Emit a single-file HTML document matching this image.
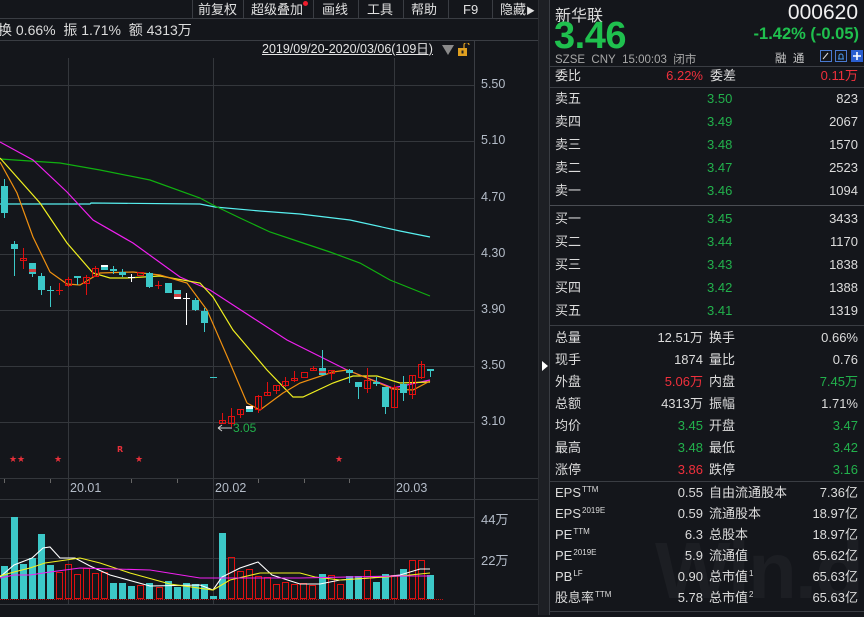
<!DOCTYPE html>
<html><head><meta charset="utf-8">
<style>
*{margin:0;padding:0;box-sizing:border-box}
body{width:864px;height:615px;overflow:hidden;background:#14161b;font-family:"Liberation Sans","Noto Sans CJK SC",sans-serif;color:#dcdcdc;position:relative}
.a{position:absolute;white-space:nowrap}
.menu{font-size:13px;top:1px;line-height:17px;color:#e0e0e0}
.ax{font-size:12.5px;color:#b4bcc8;left:481px}
.rp{position:absolute;left:550px;width:314px;font-size:13px}
.row{position:absolute;left:0;width:314px;height:20px;line-height:20px}
.row span{position:absolute;top:0}
.l1{left:5px}.v1{right:161px;text-align:right}.l2{left:159px}.v2{right:6px;text-align:right}
.p{left:157px;color:#22b14c}
.g{color:#22b14c}.r{color:#f0303c}
sup{font-size:8px;line-height:0;position:relative;top:-5px;vertical-align:baseline;margin-left:1px}
.sep{position:absolute;left:0;width:314px;height:1px;background:#3a3d43}
</style></head><body>
<div class="a" style="left:0;top:18px;width:538px;height:1px;background:#3a3d43"></div>
<div class="a" style="left:0;top:40px;width:538px;height:1px;background:#3a3d43"></div>
<div class="a" style="left:192px;top:0;width:1px;height:18px;background:#3a3d43"></div>
<div class="a" style="left:243px;top:0;width:1px;height:18px;background:#3a3d43"></div>
<div class="a" style="left:313px;top:0;width:1px;height:18px;background:#3a3d43"></div>
<div class="a" style="left:358px;top:0;width:1px;height:18px;background:#3a3d43"></div>
<div class="a" style="left:403px;top:0;width:1px;height:18px;background:#3a3d43"></div>
<div class="a" style="left:448px;top:0;width:1px;height:18px;background:#3a3d43"></div>
<div class="a" style="left:492px;top:0;width:1px;height:18px;background:#3a3d43"></div>
<div class="a menu" style="left:198px">前复权</div>
<div class="a menu" style="left:251px">超级叠加</div>
<div class="a" style="left:303px;top:1px;width:5px;height:5px;border-radius:50%;background:#f01c2c"></div>
<div class="a menu" style="left:322px">画线</div>
<div class="a menu" style="left:367px">工具</div>
<div class="a menu" style="left:411px">帮助</div>
<div class="a menu" style="left:463px">F9</div>
<div class="a menu" style="left:500px">隐藏<span style="font-size:9px">▶</span></div>
<div class="a" style="left:-2px;top:21px;font-size:14px;line-height:18px">换 0.66%&nbsp;&nbsp;振 1.71%&nbsp;&nbsp;额 4313万</div>
<div class="a" style="left:262px;top:41px;font-size:12.5px;line-height:16px;text-decoration:underline;color:#e4e4e4">2019/09/20-2020/03/06(109日)</div>
<svg class="a" style="left:440px;top:43px" width="30" height="14"><polygon points="2,2 14,2 8,12" fill="#8a8a8a"/><rect x="18" y="5" width="9" height="8" fill="#e0a020"/><path d="M24 5 V2 a2.5 2.5 0 0 1 5 0" stroke="#e0a020" fill="none" stroke-width="1.2"/><rect x="21.5" y="7.5" width="2" height="3" fill="#222"/></svg>
<div class="a" style="left:474px;top:40px;width:1px;height:575px;background:#3a3d43"></div>
<div class="a" style="left:538px;top:0;width:12px;height:615px;background:#1d1f24;border-right:1px solid #3a3d43"></div>
<div class="a" style="left:538px;top:0;width:1px;height:615px;background:#2a2c31"></div>
<svg class="a" style="left:541px;top:360px" width="8" height="12"><polygon points="1,1 7,6 1,11" fill="#fff"/></svg>

<div class="a ax" style="top:77px">5.50</div>
<div class="a ax" style="top:133px">5.10</div>
<div class="a ax" style="top:190px">4.70</div>
<div class="a ax" style="top:246px">4.30</div>
<div class="a ax" style="top:302px">3.90</div>
<div class="a ax" style="top:358px">3.50</div>
<div class="a ax" style="top:414px">3.10</div>
<div class="a ax" style="top:509px;font-size:13px">44万</div>
<div class="a ax" style="top:550px;font-size:13px">22万</div>
<div class="a" style="left:70px;top:481px;font-size:12.5px;color:#b4bcc8">20.01</div>
<div class="a" style="left:215px;top:481px;font-size:12.5px;color:#b4bcc8">20.02</div>
<div class="a" style="left:396px;top:481px;font-size:12.5px;color:#b4bcc8">20.03</div>

<svg class="a" style="left:0;top:0" width="538" height="615">
<g stroke="#34373c" stroke-width="1">
<line x1="0" y1="85.5" x2="474" y2="85.5"/><line x1="0" y1="141.5" x2="474" y2="141.5"/><line x1="0" y1="198.5" x2="474" y2="198.5"/><line x1="0" y1="254.5" x2="474" y2="254.5"/><line x1="0" y1="310.5" x2="474" y2="310.5"/><line x1="0" y1="366.5" x2="474" y2="366.5"/><line x1="0" y1="422.5" x2="474" y2="422.5"/>
<line x1="68.5" y1="58" x2="68.5" y2="604"/><line x1="213.5" y1="58" x2="213.5" y2="604"/><line x1="394.5" y1="58" x2="394.5" y2="604"/>
<line x1="0" y1="478.5" x2="538" y2="478.5"/><line x1="0" y1="499.5" x2="538" y2="499.5"/>
<line x1="0" y1="517.5" x2="474" y2="517.5"/><line x1="0" y1="558.5" x2="474" y2="558.5"/><line x1="0" y1="604.5" x2="538" y2="604.5"/>
</g>
<g stroke="#666" stroke-width="1"><line x1="4.5" y1="479" x2="4.5" y2="483"/><line x1="50.5" y1="479" x2="50.5" y2="483"/><line x1="131.5" y1="479" x2="131.5" y2="483"/><line x1="177.5" y1="479" x2="177.5" y2="483"/><line x1="258.5" y1="479" x2="258.5" y2="483"/><line x1="304.5" y1="479" x2="304.5" y2="483"/><line x1="349.5" y1="479" x2="349.5" y2="483"/></g>
<g fill="none" stroke-width="1.2">
<polyline stroke="#58f0f0" points="0,204 90,204 91,203 200,204 215,207 260,211 300,214 350,220 400,231 430,237"/>
<polyline stroke="#10b010" points="0,159 60,163 100,170 150,180 200,198 213,205 240,218 270,232 300,242 330,252 360,263 390,280 430,296"/>
<polyline stroke="#f020f0" points="0,142 33,160 67,192 93,220 133,243 180,277 210,290 250,316 287,340 347,370 393,388 430,380"/>
<polyline stroke="#f0f020" points="0,158 40,203 67,243 93,273 110,278 127,278 160,276 200,283 213,297 233,330 267,370 293,397 303,397 333,383 353,376 377,376 400,383 430,382"/>
<polyline stroke="#f09010" points="0,162 17,193 33,237 50,272 67,284 80,285 100,273 133,272 160,275 187,283 207,310 230,363 247,403 260,410 283,393 300,383 333,372 347,370 367,378 393,389 413,390 430,381"/>
</g>
<text x="233" y="432" font-size="12" fill="#22b14c" font-family="Liberation Sans">3.05</text>
<path d="M218 428 H232 M218 428 l4 -3 M218 428 l4 3" stroke="#ccc" fill="none"/>
<g fill="#e8303a" font-size="9" font-family="DejaVu Sans"><text x="9" y="462">★</text><text x="17" y="462">★</text><text x="54" y="462">★</text><text x="135" y="462">★</text><text x="335" y="462">★</text><text x="117" y="452" font-size="8" font-weight="bold">R</text></g>
<line x1="0" y1="599.5" x2="443" y2="599.5" stroke="#c01010" stroke-dasharray="1,1"/>
</svg>

<div class="a" style="left:655px;top:525px;font-size:80px;font-weight:bold;color:#1c1e23;letter-spacing:-2px">Win.d</div>
<div class="rp" style="top:0;height:615px">
 <div class="a" style="left:5px;top:2px;font-size:16px">新华联</div>
 <div class="a" style="right:6px;top:1px;font-size:21px;color:#f0f0f0">000620</div>
 <div class="a g" style="left:4px;top:15px;font-size:38px;font-weight:bold;letter-spacing:-0.5px;color:#1fc04e">3.46</div>
 <div class="a g" style="right:5px;top:25px;font-size:16.5px;font-weight:bold;color:#1fc04e">-1.42% (-0.05)</div>
 <div class="a" style="left:5px;top:51px;font-size:11.5px;color:#a8a8a8">SZSE&nbsp;&nbsp;CNY&nbsp;&nbsp;15:00:03&nbsp;&nbsp;闭市</div>
 <div class="a" style="left:225px;top:50px;font-size:11.5px;color:#ccc">融&nbsp;&nbsp;通</div>
 <svg class="a" style="left:270px;top:50px" width="44" height="13"><rect x="0.5" y="0.5" width="11" height="11" fill="none" stroke="#4a7ad0"/><path d="M3 9 L8 3" stroke="#ddd"/><rect x="15.5" y="0.5" width="11" height="11" fill="none" stroke="#4a7ad0"/><path d="M18 9 h6 M19 9 V6 a2 2 0 0 1 4 0 V9" stroke="#4a9af0" fill="none"/><rect x="31" y="0" width="12" height="12" fill="#2a5fd0"/><path d="M37 2 V10 M33 6 H41" stroke="#fff" stroke-width="1.6"/></svg>
 <div class="sep" style="top:66px"></div>
 <div class="row" style="top:66px"><span class="l1">委比</span><span class="v1 r">6.22%</span><span class="l2" style="left:160px">委差</span><span class="v2 r">0.11万</span></div>
 <div class="sep" style="top:87px"></div>
 <div class="row" style="top:89px"><span class="l1">卖五</span><span class="p">3.50</span><span class="v2">823</span></div>
 <div class="row" style="top:112px"><span class="l1">卖四</span><span class="p">3.49</span><span class="v2">2067</span></div>
 <div class="row" style="top:135px"><span class="l1">卖三</span><span class="p">3.48</span><span class="v2">1570</span></div>
 <div class="row" style="top:158px"><span class="l1">卖二</span><span class="p">3.47</span><span class="v2">2523</span></div>
 <div class="row" style="top:181px"><span class="l1">卖一</span><span class="p">3.46</span><span class="v2">1094</span></div>
 <div class="sep" style="top:205px;background:#4a4d53"></div>
 <div class="row" style="top:209px"><span class="l1">买一</span><span class="p">3.45</span><span class="v2">3433</span></div>
 <div class="row" style="top:232px"><span class="l1">买二</span><span class="p">3.44</span><span class="v2">1170</span></div>
 <div class="row" style="top:255px"><span class="l1">买三</span><span class="p">3.43</span><span class="v2">1838</span></div>
 <div class="row" style="top:278px"><span class="l1">买四</span><span class="p">3.42</span><span class="v2">1388</span></div>
 <div class="row" style="top:301px"><span class="l1">买五</span><span class="p">3.41</span><span class="v2">1319</span></div>
 <div class="sep" style="top:325px"></div>
 <div class="row" style="top:328px"><span class="l1">总量</span><span class="v1">12.51万</span><span class="l2">换手</span><span class="v2">0.66%</span></div>
 <div class="row" style="top:350px"><span class="l1">现手</span><span class="v1">1874</span><span class="l2">量比</span><span class="v2">0.76</span></div>
 <div class="row" style="top:372px"><span class="l1">外盘</span><span class="v1 r">5.06万</span><span class="l2">内盘</span><span class="v2 g">7.45万</span></div>
 <div class="row" style="top:394px"><span class="l1">总额</span><span class="v1">4313万</span><span class="l2">振幅</span><span class="v2">1.71%</span></div>
 <div class="row" style="top:416px"><span class="l1">均价</span><span class="v1 g">3.45</span><span class="l2">开盘</span><span class="v2 g">3.47</span></div>
 <div class="row" style="top:438px"><span class="l1">最高</span><span class="v1 g">3.48</span><span class="l2">最低</span><span class="v2 g">3.42</span></div>
 <div class="row" style="top:460px"><span class="l1">涨停</span><span class="v1 r">3.86</span><span class="l2">跌停</span><span class="v2 g">3.16</span></div>
 <div class="sep" style="top:481px"></div>
 <div class="row" style="top:483px"><span class="l1">EPS<sup>TTM</sup></span><span class="v1">0.55</span><span class="l2">自由流通股本</span><span class="v2">7.36亿</span></div>
 <div class="row" style="top:504px"><span class="l1">EPS<sup>2019E</sup></span><span class="v1">0.59</span><span class="l2">流通股本</span><span class="v2">18.97亿</span></div>
 <div class="row" style="top:525px"><span class="l1">PE<sup>TTM</sup></span><span class="v1">6.3</span><span class="l2">总股本</span><span class="v2">18.97亿</span></div>
 <div class="row" style="top:546px"><span class="l1">PE<sup>2019E</sup></span><span class="v1">5.9</span><span class="l2">流通值</span><span class="v2">65.62亿</span></div>
 <div class="row" style="top:567px"><span class="l1">PB<sup>LF</sup></span><span class="v1">0.90</span><span class="l2">总市值<sup>1</sup></span><span class="v2">65.63亿</span></div>
 <div class="row" style="top:588px"><span class="l1">股息率<sup>TTM</sup></span><span class="v1">5.78</span><span class="l2">总市值<sup>2</sup></span><span class="v2">65.63亿</span></div>
 <div class="sep" style="top:611px"></div>
</div>

<svg class="a" style="left:0;top:0" width="474" height="615">
<g stroke-width="1" shape-rendering="crispEdges">
<line x1="4.5" y1="179" x2="4.5" y2="218" stroke="#3cc8c8"/><rect x="1" y="186" width="7" height="27" fill="#3cc8c8"/>
<line x1="14.5" y1="241" x2="14.5" y2="276" stroke="#3cc8c8"/><rect x="11" y="244" width="7" height="5" fill="#3cc8c8"/>
<line x1="23.5" y1="248" x2="23.5" y2="269" stroke="#e01010"/><rect x="20.5" y="258.5" width="6" height="2" fill="none" stroke="#e01010"/>
<line x1="32.5" y1="263" x2="32.5" y2="277" stroke="#3cc8c8"/><rect x="29" y="263" width="7" height="11" fill="#3cc8c8"/><rect x="29" y="269" width="7" height="3" fill="#d04040"/>
<line x1="41.5" y1="273" x2="41.5" y2="295" stroke="#3cc8c8"/><rect x="38" y="276" width="7" height="14" fill="#3cc8c8"/>
<line x1="50.5" y1="286" x2="50.5" y2="307" stroke="#3cc8c8"/><line x1="47" y1="290.5" x2="54" y2="290.5" stroke="#3cc8c8"/>
<line x1="59.5" y1="283" x2="59.5" y2="295" stroke="#e01010"/><line x1="56" y1="290.5" x2="63" y2="290.5" stroke="#e01010"/>
<line x1="68.5" y1="277" x2="68.5" y2="287" stroke="#e01010"/><rect x="65.5" y="279.5" width="6" height="6" fill="none" stroke="#e01010"/>
<line x1="77.5" y1="276" x2="77.5" y2="285" stroke="#3cc8c8"/><rect x="74" y="276" width="7" height="2" fill="#3cc8c8"/>
<line x1="86.5" y1="275" x2="86.5" y2="295" stroke="#e01010"/><rect x="83.5" y="277.5" width="6" height="6" fill="none" stroke="#e01010"/>
<line x1="95.5" y1="266" x2="95.5" y2="277" stroke="#e01010"/><rect x="92.5" y="268.5" width="6" height="8" fill="none" stroke="#e01010"/>
<rect x="101" y="265" width="7" height="5" fill="#3cc8c8"/><rect x="101" y="265" width="7" height="2" fill="#fff"/>
<line x1="113.5" y1="266" x2="113.5" y2="274" stroke="#3cc8c8"/><rect x="110" y="269" width="7" height="2" fill="#3cc8c8"/>
<line x1="122.5" y1="269" x2="122.5" y2="277" stroke="#3cc8c8"/><rect x="119" y="272" width="7" height="3" fill="#3cc8c8"/>
<line x1="131.5" y1="274" x2="131.5" y2="282" stroke="#fff"/><line x1="128" y1="277.5" x2="135" y2="277.5" stroke="#fff"/>
<rect x="137.5" y="272.5" width="6" height="3" fill="none" stroke="#e01010"/>
<line x1="149.5" y1="272" x2="149.5" y2="288" stroke="#3cc8c8"/><rect x="146" y="273" width="7" height="14" fill="#3cc8c8"/>
<line x1="158.5" y1="281" x2="158.5" y2="289" stroke="#e01010"/><line x1="155" y1="285.5" x2="162" y2="285.5" stroke="#e01010"/>
<rect x="165" y="283" width="7" height="10" fill="#3cc8c8"/>
<rect x="174" y="290" width="7" height="9" fill="#3cc8c8"/><rect x="174" y="294" width="7" height="3" fill="#d04040"/><rect x="174" y="297" width="7" height="2" fill="#fff"/>
<line x1="186.5" y1="293" x2="186.5" y2="325" stroke="#fff"/><line x1="183" y1="298.5" x2="190" y2="298.5" stroke="#fff"/>
<line x1="195.5" y1="298" x2="195.5" y2="311" stroke="#3cc8c8"/><rect x="192" y="300" width="7" height="10" fill="#3cc8c8"/>
<line x1="204.5" y1="308" x2="204.5" y2="332" stroke="#3cc8c8"/><rect x="201" y="311" width="7" height="12" fill="#3cc8c8"/>
<line x1="210" y1="377.5" x2="217" y2="377.5" stroke="#3cc8c8"/>
<line x1="222.5" y1="413" x2="222.5" y2="423" stroke="#e01010"/><rect x="219.5" y="420.5" width="6" height="3" fill="none" stroke="#e01010"/>
<line x1="231.5" y1="408" x2="231.5" y2="427" stroke="#e01010"/><rect x="228.5" y="416.5" width="6" height="7" fill="none" stroke="#e01010"/>
<line x1="240.5" y1="409" x2="240.5" y2="418" stroke="#e01010"/><rect x="237.5" y="409.5" width="6" height="5" fill="none" stroke="#e01010"/>
<rect x="246" y="406" width="7" height="6" fill="#3cc8c8"/><rect x="246" y="406" width="7" height="3" fill="#fff"/>
<line x1="258.5" y1="395" x2="258.5" y2="413" stroke="#e01010"/><rect x="255.5" y="396.5" width="6" height="13" fill="none" stroke="#e01010"/>
<line x1="267.5" y1="382" x2="267.5" y2="395" stroke="#e01010"/><rect x="264.5" y="392.5" width="6" height="3" fill="none" stroke="#e01010"/>
<line x1="276.5" y1="385" x2="276.5" y2="394" stroke="#e01010"/><rect x="273.5" y="385.5" width="6" height="5" fill="none" stroke="#e01010"/>
<line x1="285.5" y1="377" x2="285.5" y2="387" stroke="#e01010"/><rect x="282.5" y="381.5" width="6" height="4" fill="none" stroke="#e01010"/>
<line x1="294.5" y1="371" x2="294.5" y2="382" stroke="#e01010"/><rect x="291.5" y="378.5" width="6" height="2" fill="none" stroke="#e01010"/>
<rect x="301.5" y="372.5" width="6" height="5" fill="none" stroke="#e01010"/>
<line x1="313.5" y1="366" x2="313.5" y2="370" stroke="#e01010"/><rect x="310.5" y="368.5" width="6" height="2" fill="none" stroke="#e01010"/>
<line x1="322.5" y1="350" x2="322.5" y2="375" stroke="#3cc8c8"/><rect x="319" y="368" width="7" height="7" fill="#3cc8c8"/><rect x="319" y="371" width="7" height="2" fill="#d04040"/>
<line x1="331.5" y1="370" x2="331.5" y2="380" stroke="#e01010"/><rect x="328.5" y="370.5" width="6" height="3" fill="none" stroke="#e01010"/>
<line x1="349.5" y1="369" x2="349.5" y2="383" stroke="#3cc8c8"/><rect x="346" y="370" width="7" height="3" fill="#3cc8c8"/>
<line x1="358.5" y1="382" x2="358.5" y2="399" stroke="#3cc8c8"/><rect x="355" y="382" width="7" height="5" fill="#3cc8c8"/>
<line x1="367.5" y1="368" x2="367.5" y2="393" stroke="#e01010"/><rect x="364.5" y="380.5" width="6" height="8" fill="none" stroke="#e01010"/>
<line x1="376.5" y1="377" x2="376.5" y2="386" stroke="#3cc8c8"/><rect x="373" y="382" width="7" height="2" fill="#3cc8c8"/>
<line x1="385.5" y1="387" x2="385.5" y2="414" stroke="#3cc8c8"/><rect x="382" y="387" width="7" height="20" fill="#3cc8c8"/>
<line x1="394.5" y1="385" x2="394.5" y2="408" stroke="#e01010"/><rect x="391.5" y="387.5" width="6" height="20" fill="none" stroke="#e01010"/>
<line x1="403.5" y1="376" x2="403.5" y2="401" stroke="#3cc8c8"/><rect x="400" y="384" width="7" height="9" fill="#3cc8c8"/>
<line x1="412.5" y1="375" x2="412.5" y2="399" stroke="#e01010"/><rect x="409.5" y="375.5" width="6" height="19" fill="none" stroke="#e01010"/>
<line x1="421.5" y1="361" x2="421.5" y2="379" stroke="#e01010"/><rect x="418.5" y="364.5" width="6" height="13" fill="none" stroke="#e01010"/>
<line x1="430.5" y1="369" x2="430.5" y2="377" stroke="#3cc8c8"/><rect x="427" y="369" width="7" height="2" fill="#3cc8c8"/>
</g>
<g shape-rendering="crispEdges">
<rect x="1" y="566" width="7" height="33" fill="#3cc8c8"/>
<rect x="11" y="517" width="7" height="82" fill="#3cc8c8"/>
<rect x="20" y="564" width="7" height="35" fill="#3cc8c8"/>
<rect x="29" y="558" width="7" height="41" fill="#3cc8c8"/>
<rect x="38" y="534" width="7" height="65" fill="#3cc8c8"/>
<rect x="47" y="565" width="7" height="34" fill="#3cc8c8"/>
<g fill="none" stroke="#e01010">
<rect x="56.5" y="572.5" width="6" height="26"/><rect x="65.5" y="564.5" width="6" height="34"/><rect x="74.5" y="574.5" width="6" height="24"/><rect x="83.5" y="568.5" width="6" height="30"/><rect x="92.5" y="573.5" width="6" height="25"/><rect x="101.5" y="572.5" width="6" height="26"/>
<rect x="137.5" y="585.5" width="6" height="13"/><rect x="156.5" y="587.5" width="6" height="11"/>
<rect x="228.5" y="557.5" width="6" height="41"/><rect x="237.5" y="571.5" width="6" height="27"/><rect x="246.5" y="569.5" width="6" height="29"/><rect x="255.5" y="576.5" width="6" height="22"/><rect x="264.5" y="577.5" width="6" height="21"/><rect x="273.5" y="584.5" width="6" height="14"/><rect x="282.5" y="582.5" width="6" height="16"/><rect x="291.5" y="584.5" width="6" height="14"/><rect x="300.5" y="583.5" width="6" height="15"/><rect x="309.5" y="585.5" width="6" height="13"/>
<rect x="328.5" y="575.5" width="6" height="23"/><rect x="337.5" y="584.5" width="6" height="14"/><rect x="364.5" y="570.5" width="6" height="28"/><rect x="391.5" y="575.5" width="6" height="23"/><rect x="409.5" y="560.5" width="6" height="38"/><rect x="418.5" y="560.5" width="6" height="38"/>
</g>
<g fill="#3cc8c8">
<rect x="110" y="583" width="7" height="16"/><rect x="119" y="583" width="7" height="16"/><rect x="128" y="586" width="7" height="13"/><rect x="146" y="583" width="7" height="16"/><rect x="165" y="581" width="7" height="18"/><rect x="174" y="587" width="7" height="12"/><rect x="183" y="583" width="7" height="16"/><rect x="192" y="584" width="7" height="15"/><rect x="201" y="584" width="7" height="15"/><rect x="210" y="596" width="7" height="3"/><rect x="219" y="533" width="7" height="66"/>
<rect x="319" y="574" width="7" height="25"/><rect x="346" y="576" width="7" height="23"/><rect x="355" y="576" width="7" height="23"/><rect x="373" y="582" width="7" height="17"/><rect x="382" y="574" width="7" height="25"/><rect x="400" y="569" width="7" height="30"/><rect x="427" y="575" width="7" height="24"/>
</g>
</g>
<g fill="none" stroke-width="1.1">
<polyline stroke="#ffffff" points="0,577 14,565 32,558 43,548 50,547 60,558 75,558 90,566 110,575 150,586 200,585 213,590 222,577 240,568 258,562 272,575 300,584 320,584 340,580 370,578 400,575 420,569 430,569"/>
<polyline stroke="#f0f020" points="0,576 14,572 30,568 45,563 80,558 100,563 130,573 170,584 213,590 230,580 260,573 300,573 315,577 340,580 370,578 400,576 430,573"/>
<polyline stroke="#f020f0" points="0,578 14,575 30,575 50,572 80,568 150,570 200,578 300,578 400,576 430,576"/>
</g>
</svg>
</body></html>
